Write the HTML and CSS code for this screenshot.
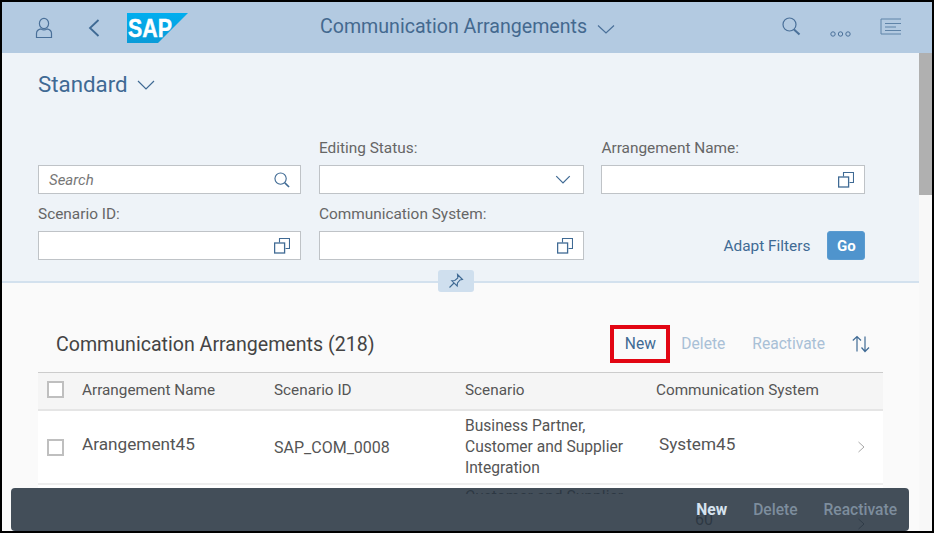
FILE: index.html
```html
<!DOCTYPE html>
<html lang="en">
<head>
<meta charset="utf-8">
<title>Communication Arrangements</title>
<link rel="stylesheet" href="styles.css">
</head>
<body>
<div class="frame">
  <header class="shell">
    <div class="shell-left">
      <svg class="ico-person" viewBox="0 0 18 22" fill="none" stroke="#4a7099" stroke-width="1.2"><ellipse cx="9" cy="6.5" rx="4.6" ry="5.2"/><path d="M1.500 20.500v-4c0-2.500 2.500-4.200 4.500-4.600 1.800 1.200 4.200 1.200 6 0 2 .4 4.500 2.100 4.500 4.600v4z"/></svg>
      <svg class="ico-back" viewBox="0 0 12 18" fill="none" stroke="#3f6a94" stroke-width="1.800"><path d="M10.500 1 2 9l8.500 8"/></svg>
      <svg class="logo" viewBox="0 0 61 30"><defs><linearGradient id="sapg" x1="0" y1="0" x2="0" y2="1"><stop offset="0" stop-color="#00aeef"/><stop offset="1" stop-color="#0a9bd8"/></linearGradient></defs><polygon points="0,0 61,0 31,30 0,30" fill="url(#sapg)"/><text class="logo-text" x="1" y="24" textLength="44" lengthAdjust="spacingAndGlyphs">SAP</text></svg>
    </div>
    <div class="shell-title">
      <span>Communication Arrangements</span>
      <svg class="ico-chev-title" viewBox="0 0 18 10" fill="none" stroke="#4a7099" stroke-width="1.200"><path d="M1 1.500 9 9l8-7.500"/></svg>
    </div>
    <div class="shell-right">
      <svg class="ico-search" viewBox="0 0 19 19" fill="none" stroke="#4a7099" stroke-width="1.200"><circle cx="7.500" cy="7.500" r="6.500"/><path d="m12 12.500 5.500 5" stroke-width="2"/></svg>
      <svg class="ico-more" viewBox="0 0 21 6" fill="none" stroke="#4a7099"><circle cx="3" cy="3" r="2.200"/><circle cx="10.500" cy="3" r="2.200"/><circle cx="18" cy="3" r="2.200"/></svg>
      <svg class="ico-list" viewBox="0 0 21 17" fill="none" stroke="#5f84a8" stroke-width="1"><path d="M21 1H1v15h20M5 5.500h16M5 9h11M5 12.500h16"/></svg>
    </div>
  </header>
  <div class="body">
    <main class="content">
      <section class="filterbar">
        <h1 class="variant">Standard
          <svg class="ico-chev-variant" viewBox="0 0 18 10" fill="none" stroke="#3f6a94" stroke-width="1.200"><path d="M1 1 9 9l8-8"/></svg>
        </h1>
        <div class="filters">
          <div class="field">
            <div class="input"><span class="placeholder">Search</span>
              <svg class="ico-field" viewBox="0 0 17 17" fill="none" stroke="#3f6a94" stroke-width="1.200"><circle cx="7" cy="7" r="6"/><path d="m11.500 11.500 4.500 4.500" stroke-width="1.700"/></svg>
            </div>
          </div>
          <div class="field">
            <label class="label">Editing Status:</label>
            <div class="input">
              <svg class="ico-field ico-down" viewBox="0 0 14 8" fill="none" stroke="#3f6a94" stroke-width="1.100"><path d="M1 1l6 6 6-6"/></svg>
            </div>
          </div>
          <div class="field">
            <label class="label">Arrangement Name:</label>
            <div class="input">
              <svg class="ico-field" viewBox="0 0 16 16" fill="none" stroke="#3f6a94" stroke-width="1.100"><path d="M5.500 4.500v-4h10v10h-4"/><rect x=".6" y="5" width="10" height="10" stroke-width="1.300"/></svg>
            </div>
          </div>
          <div class="field">
            <label class="label">Scenario ID:</label>
            <div class="input">
              <svg class="ico-field" viewBox="0 0 16 16" fill="none" stroke="#3f6a94" stroke-width="1.100"><path d="M5.500 4.500v-4h10v10h-4"/><rect x=".6" y="5" width="10" height="10" stroke-width="1.300"/></svg>
            </div>
          </div>
          <div class="field">
            <label class="label">Communication System:</label>
            <div class="input">
              <svg class="ico-field" viewBox="0 0 16 16" fill="none" stroke="#3f6a94" stroke-width="1.100"><path d="M5.500 4.500v-4h10v10h-4"/><rect x=".6" y="5" width="10" height="10" stroke-width="1.300"/></svg>
            </div>
          </div>
          <div class="filter-actions">
            <span class="link">Adapt Filters</span>
            <span class="go">Go</span>
          </div>
        </div>
        <span class="pin">
          <svg viewBox="0 0 16 16" fill="none" stroke="#3f6a94" stroke-width="1.100"><path d="M9.500 1.500l5 5-2.500.5-2.500 3-.3 3L3.800 7.800l3-.3 3-2.500z"/><path d="M6 10l-4.500 4.500"/></svg>
        </span>
      </section>
      <section class="list">
        <div class="toolbar">
          <h2 class="list-title">Communication Arrangements (218)</h2>
          <div class="actions">
            <span class="act act-new">New</span>
            <span class="act act-off">Delete</span>
            <span class="act act-off">Reactivate</span>
            <svg class="ico-sort" viewBox="0 0 20 18" fill="none" stroke="#3f6a94" stroke-width="1.200"><path d="M6 16.500V1.500M1.800 5.500 6 1.500l4 4M14 1.500v15M10.500 12.500l3.500 4 4-4"/></svg>
          </div>
        </div>
        <table class="table">
          <colgroup><col class="c-check"><col class="c-name"><col class="c-col"><col class="c-col"><col><col class="c-nav"></colgroup>
          <thead>
            <tr>
              <th><span class="check"></span></th>
              <th>Arrangement Name</th>
              <th>Scenario ID</th>
              <th>Scenario</th>
              <th>Communication System</th>
              <th></th>
            </tr>
          </thead>
          <tbody>
            <tr class="row">
              <td><span class="check"></span></td>
              <td class="big">Arangement45</td>
              <td class="mono-id">SAP_COM_0008</td>
              <td>Business Partner, Customer and Supplier Integration</td>
              <td class="big indent">System45</td>
              <td><svg class="ico-nav" viewBox="0 0 8 12" fill="none" stroke="#a8a8a8"><path d="M1.500 1 7 6l-5.500 5"/></svg></td>
            </tr>
            <tr class="row row-under">
              <td></td>
              <td></td>
              <td></td>
              <td class="under"><div class="clip">Customer and Supplier</div></td>
              <td class="big ghost ghost-60">60</td>
              <td class="ghost"><svg class="ico-nav" viewBox="0 0 8 12" fill="none" stroke="#2f3a45"><path d="M1.500 1 7 6l-5.500 5"/></svg></td>
            </tr>
          </tbody>
        </table>
      </section>
      <footer class="footer">
        <span class="foot foot-new">New</span>
        <span class="foot">Delete</span>
        <span class="foot">Reactivate</span>
      </footer>
    </main>
    <div class="scrollbar"><div class="thumb"></div></div>
  </div>
</div>
</body>
</html>
```
FILE: styles.css
```css
* { box-sizing: border-box; }
html, body { margin: 0; height: 100%; overflow: hidden; }
body { font-family: Roboto, "Noto Sans", sans-serif; color: #555; }
svg { display: block; flex: none; }

.frame {
  width: 934px; height: 533px;
  border: 2px solid #000;
  display: flex; flex-direction: column;
  background: #000;
  overflow: hidden;
}

.shell {
  height: 51px; flex: none;
  background: #b3cae1;
  display: grid;
  grid-template-columns: 318px auto 1fr;
  align-items: center;
  color: #44698f;
}
.shell-left { display: flex; align-items: center; padding-left: 33px; }
.ico-person { width: 18px; height: 22px; }
.ico-back { width: 12px; height: 18px; margin-left: 35px; }
.logo { width: 61px; height: 30px; margin-left: 27px; }
.logo-text { font: bold 25px "Liberation Sans", sans-serif; fill: #fff; stroke: #fff; stroke-width: .4px; }
.shell-title { display: flex; align-items: center; gap: 10px; font-size: 19.600px; margin-top: -3px; }
.ico-chev-title { width: 18px; height: 10px; margin-top: 6px; }
.shell-right { display: flex; align-items: center; justify-content: flex-end; padding-right: 31px; }
.ico-search { width: 19px; height: 19px; margin-top: -3px; }
.ico-more { width: 21px; height: 6px; margin-left: 29px; margin-top: 12px; }
.ico-list { width: 21px; height: 17px; margin-left: 29px; margin-top: -3px; }

.body { flex: 1; display: flex; min-height: 0; }
.content { flex: 1; position: relative; background: #fafafa; overflow: hidden; min-width: 0; }

.scrollbar { width: 13px; background: #f8f8f8; }
.thumb { height: 142px; background: #b0b0b0; }

.filterbar {
  position: relative;
  height: 230px;
  background: #eef3f8;
  border-bottom: 2px solid #d3e1ee;
  padding: 16px 0 0 36px;
}
.variant {
  margin: 0; display: flex; align-items: center; gap: 9px;
  font-size: 22.300px; line-height: 30px; font-weight: 400; color: #3f6a94;
}
.ico-chev-variant { width: 18px; height: 10px; margin-top: 2px; }
.filters {
  display: grid;
  grid-template-columns: 263.400px 265px 264px;
  grid-template-rows: 55px 55px;
  column-gap: 17.500px; row-gap: 11px;
  margin-top: 40px;
  align-items: end;
}
.label { display: block; font-size: 15.400px; line-height: 18px; color: #666; margin-bottom: 8px; }
.input {
  height: 29px; background: #fff;
  border: 1px solid #bfc3c7;
  display: flex; align-items: center; justify-content: space-between;
  padding: 0 10px;
}
.input .ico-field { width: 16px; height: 16px; margin-left: auto; }
.input .ico-down { width: 16px; height: 9px; margin-right: 2px; }
.placeholder { font-style: italic; font-size: 15px; color: #777; }
.filter-actions { display: flex; align-items: center; justify-content: flex-end; gap: 17px; height: 29px; }
.link { font-size: 15.400px; color: #3f6a94; }
.go {
  width: 38px; height: 29px; border-radius: 3px;
  background: #4f94cd; border: 1px solid #5a9bd0;
  color: #fff; font-size: 15px; font-weight: 700;
  display: flex; align-items: center; justify-content: center;
}
.pin {
  position: absolute; left: 436px; bottom: -11px;
  width: 36px; height: 22px; border-radius: 3px;
  background: #cfdfee;
  display: flex; align-items: center; justify-content: center;
}
.pin svg { width: 16px; height: 16px; }

.list { padding: 0 36px; }
.toolbar {
  height: 89px; padding: 42px 0 0 18px;
  display: flex; align-items: flex-start; justify-content: space-between;
}
.list-title { margin: 0; font-size: 19.600px; line-height: 40px; font-weight: 400; color: #444; }
.actions { display: flex; align-items: center; height: 38px; padding-right: 12px; }
.act { font-size: 15.600px; }
.act-new {
  display: flex; align-items: center; justify-content: center;
  width: 60px; height: 38px;
  border: 4px solid #e20613; color: #3f6a94;
}
.act-off { color: #a9c0d6; margin-left: 11px; }
.act-off + .act-off { margin-left: 27px; }
.ico-sort { width: 20px; height: 18px; margin-left: 26px; }

.table { width: 845px; border-collapse: collapse; table-layout: fixed; background: #fff; }
.c-check { width: 44px; }
.c-name { width: 192px; }
.c-col { width: 191px; }
.c-nav { width: 27px; }
.table th {
  height: 37px; padding: 0 0 2px;
  background: #f5f5f5;
  border-top: 1px solid #ccc;
  border-bottom: 2px solid #e5e5e5;
  font-size: 15.300px; font-weight: 400; color: #555; text-align: left;
}
.table td {
  padding: 5px 10px 4px 0;
  border-bottom: 2px solid #eee;
  font-size: 15.600px; line-height: 21px; color: #555;
  vertical-align: middle;
}
.table td.mono-id { font-size: 16px; }
.table td.big { font-size: 17.200px; padding-bottom: 10px; }
.table td.indent { padding-left: 3px; }
.table td.under { vertical-align: top; padding-top: 2px; }
.clip { height: 7px; overflow: hidden; color: #222; }
.check {
  display: block; width: 17px; height: 17px; margin-left: 9px;
  background: #fff; border: 2px solid #bfbfbf;
}
.ico-nav { width: 8px; height: 12px; margin-left: 1px; }
.row-under td { height: 48px; }
.table td.ghost { vertical-align: bottom; padding-bottom: 1px; }
.table td.ghost-60 { padding-left: 39px; font-size: 16px; color: #222; }

.footer {
  position: absolute; left: 9px; right: 10px; bottom: 0; top: 435px;
  background: rgba(47, 59, 71, .9);
  border-radius: 4px;
  display: flex; align-items: center; justify-content: flex-end;
  padding: 0 12px 0 0; gap: 26px;
  font-size: 15.600px;
}
.foot { color: #7d8d9d; font-weight: 500; }
.foot-new { color: #d6e3ef; font-weight: 700; }
```
